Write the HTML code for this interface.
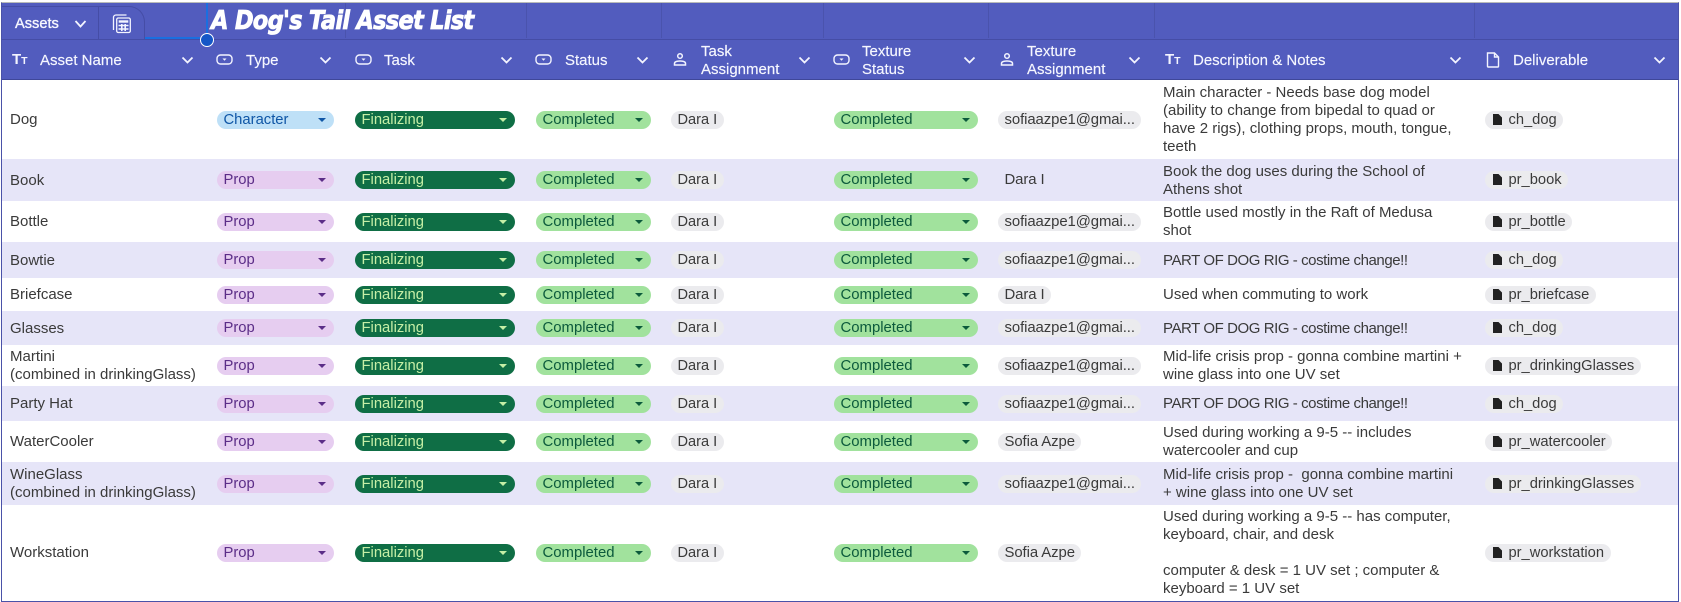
<!DOCTYPE html>
<html><head><meta charset="utf-8"><style>
html,body{margin:0;padding:0;background:#fff}
body{width:1681px;height:601px;position:relative;overflow:hidden;font:15px/18px "Liberation Sans",sans-serif;color:#3a3a3a}
#wrap{position:absolute;left:1px;top:2px;width:1676px;height:598px;border:1px solid #4a52a8;border-top:1px solid #b9bbb9;box-sizing:content-box}
.abs{position:absolute}
#top{position:absolute;left:2px;top:3px;width:1676px;height:36px;background:#525cbe}
#head{position:absolute;left:2px;top:39px;width:1676px;height:41px;background:#525cbe;border-top:1px solid #454da6;border-bottom:1px solid #3f4799;box-sizing:border-box}
.sep{position:absolute;top:3px;height:35px;width:1px;background:#4a53ad}
.h{position:absolute;color:#f6f7ff;font-size:15px;line-height:18px;white-space:nowrap;transform:translateY(1px);-webkit-text-stroke:.15px #f6f7ff}
.ic{position:absolute;top:51px;fill:none;stroke:#f3f4ff}
.tt{position:absolute;top:51px;color:#f3f4ff;font-weight:bold;font-size:15px;line-height:18px}
.tt small{font-size:10.5px}
.r{position:absolute;left:2px;width:1676px}
.a{background:#e6e5f8}
.c{position:absolute;top:0;bottom:0;display:flex;align-items:center;white-space:nowrap}
.n{left:8px;padding-top:1px}
.t{left:215px;font-size:14.8px}.k{left:353px;font-size:14.8px}.s{left:534px;font-size:14.9px}.u{left:669px;font-size:14.6px}.x{left:832px;font-size:14.9px}.y{left:996px;font-size:14.9px}.d{left:1161px;white-space:pre-line;padding-top:1px}.f{left:1483px;font-size:14.7px}
.y .g{letter-spacing:-.08px}
.cap{letter-spacing:-.43px}
.p{display:block;height:18px;line-height:19px;border-radius:9px;padding-left:6.5px;box-sizing:border-box;position:relative}
.p:after{content:"";position:absolute;right:8px;top:7px;border:4.5px solid transparent;border-top:4.5px solid currentColor;border-bottom:0}
.pr{width:117px;background:#e6cdf0;color:#5b2d87}
.ch{width:117px;background:#bee0f7;color:#0f56a6}
.fi{width:160px;background:#0f6e45;color:#c6efa6}
.co{width:115px;background:#a1e29d;color:#0c5a3c}
.cw{width:144px}
.g{display:block;height:18px;line-height:19px;border-radius:9px;background:#ebebee;color:#3a3a3a;padding:0 6.5px}
.g svg{display:inline-block;vertical-align:-1px;margin-right:7px;margin-left:1px}
</style></head><body>
<div id="wrap"></div>
<div id="top"></div>
<div id="head"></div>
<div class="sep" style="left:345px"></div><div class="sep" style="left:526px"></div><div class="sep" style="left:661px"></div><div class="sep" style="left:823px"></div><div class="sep" style="left:988px"></div><div class="sep" style="left:1154px"></div><div class="sep" style="left:1474px"></div>

<div class="abs" style="left:2px;top:6px;width:143px;height:33px;border:1px solid #454da6;border-left:0;border-bottom:0;border-radius:0 16px 0 0;box-sizing:border-box"></div>
<div class="abs" style="left:98px;top:6px;width:1px;height:33px;background:#454da6"></div>
<div class="h" style="left:15px;top:14px;font-size:14.6px;-webkit-text-stroke:.35px #f6f7ff">Assets</div>
<svg class="abs" style="left:74px;top:19px" width="13" height="10" fill="none" stroke="#f3f4ff" stroke-width="1.8"><path d="M1.5 2 6.5 7.5 11.5 2"/></svg>
<svg class="abs" style="left:112px;top:14px" width="20" height="20" fill="none" stroke="#f3f4ff" stroke-width="1.3"><path d="M1.5 16V3.5C1.5 2 2.5 1 4 1H14.5"/><rect x="4.7" y="4" width="13.6" height="14.5" rx="1.5"/><path d="M6.7 7.5H16.3" stroke-width="2.4"/><path d="M6.5 11.5H16.5M6.5 15H16.5M9.8 10V17M13.2 10V17" stroke-width="1.6"/></svg>
<div class="abs" style="left:145px;top:37px;width:62px;height:2px;background:#1a6fe0"></div>
<div class="abs" style="left:206px;top:3px;width:2px;height:35px;background:#1a6fe0"></div>
<div class="abs" style="left:200px;top:33px;width:12px;height:12px;border-radius:50%;background:#1557c7;border:1px solid #fff"></div>
<div class="abs" style="left:211px;top:6px;color:#fff;font:italic bold 26px/30px 'DejaVu Sans',sans-serif;letter-spacing:-.9px;-webkit-text-stroke:.8px #fff;white-space:nowrap;transform:scaleX(.87);transform-origin:0 0">A Dog's Tail Asset List</div>

<div class="tt" style="left:12px">T<small>T</small></div><div class="h" style="left:40px;top:51px">Asset Name</div>
<svg class="ic" style="left:216px;top:53px" width="17" height="13" stroke-width="1.4"><rect x="1" y="2" width="15" height="9" rx="3.5"/><path d="M6.5 5.5H10.5L8.5 7.7Z" fill="#f3f4ff" stroke="none"/></svg><div class="h" style="left:246px;top:51px">Type</div>
<svg class="ic" style="left:355px;top:53px" width="17" height="13" stroke-width="1.4"><rect x="1" y="2" width="15" height="9" rx="3.5"/><path d="M6.5 5.5H10.5L8.5 7.7Z" fill="#f3f4ff" stroke="none"/></svg><div class="h" style="left:384px;top:51px">Task</div>
<svg class="ic" style="left:535px;top:53px" width="17" height="13" stroke-width="1.4"><rect x="1" y="2" width="15" height="9" rx="3.5"/><path d="M6.5 5.5H10.5L8.5 7.7Z" fill="#f3f4ff" stroke="none"/></svg><div class="h" style="left:565px;top:51px">Status</div>
<svg class="ic" style="left:673px;top:52px" width="14" height="15" stroke-width="1.5"><circle cx="7" cy="4" r="2.3"/><path d="M1.5 13V11.5C1.5 9.8 4 9 7 9S12.5 9.8 12.5 11.5V13Z"/></svg><div class="h" style="left:701px;top:42px">Task<br>Assignment</div>
<svg class="ic" style="left:833px;top:53px" width="17" height="13" stroke-width="1.4"><rect x="1" y="2" width="15" height="9" rx="3.5"/><path d="M6.5 5.5H10.5L8.5 7.7Z" fill="#f3f4ff" stroke="none"/></svg><div class="h" style="left:862px;top:42px">Texture<br>Status</div>
<svg class="ic" style="left:1000px;top:52px" width="14" height="15" stroke-width="1.5"><circle cx="7" cy="4" r="2.3"/><path d="M1.5 13V11.5C1.5 9.8 4 9 7 9S12.5 9.8 12.5 11.5V13Z"/></svg><div class="h" style="left:1027px;top:42px">Texture<br>Assignment</div>
<div class="tt" style="left:1165px">T<small>T</small></div><div class="h" style="left:1193px;top:51px">Description &amp; Notes</div>
<svg class="ic" style="left:1486px;top:52px" width="14" height="16" stroke-width="1.4"><path d="M1.5 1H8.5L12.5 5V14.2C12.5 14.7 12.2 15 11.7 15H2.3C1.8 15 1.5 14.7 1.5 14.2ZM8.5 1V5H12.5"/></svg><div class="h" style="left:1513px;top:51px">Deliverable</div>

<svg class="abs" style="left:181px;top:56px" width="13" height="9" fill="none" stroke="#f3f4ff" stroke-width="1.8"><path d="M1.5 1.5 6.5 6.5 11.5 1.5"/></svg>
<svg class="abs" style="left:319px;top:56px" width="13" height="9" fill="none" stroke="#f3f4ff" stroke-width="1.8"><path d="M1.5 1.5 6.5 6.5 11.5 1.5"/></svg>
<svg class="abs" style="left:500px;top:56px" width="13" height="9" fill="none" stroke="#f3f4ff" stroke-width="1.8"><path d="M1.5 1.5 6.5 6.5 11.5 1.5"/></svg>
<svg class="abs" style="left:636px;top:56px" width="13" height="9" fill="none" stroke="#f3f4ff" stroke-width="1.8"><path d="M1.5 1.5 6.5 6.5 11.5 1.5"/></svg>
<svg class="abs" style="left:798px;top:56px" width="13" height="9" fill="none" stroke="#f3f4ff" stroke-width="1.8"><path d="M1.5 1.5 6.5 6.5 11.5 1.5"/></svg>
<svg class="abs" style="left:963px;top:56px" width="13" height="9" fill="none" stroke="#f3f4ff" stroke-width="1.8"><path d="M1.5 1.5 6.5 6.5 11.5 1.5"/></svg>
<svg class="abs" style="left:1128px;top:56px" width="13" height="9" fill="none" stroke="#f3f4ff" stroke-width="1.8"><path d="M1.5 1.5 6.5 6.5 11.5 1.5"/></svg>
<svg class="abs" style="left:1449px;top:56px" width="13" height="9" fill="none" stroke="#f3f4ff" stroke-width="1.8"><path d="M1.5 1.5 6.5 6.5 11.5 1.5"/></svg>
<svg class="abs" style="left:1653px;top:56px" width="13" height="9" fill="none" stroke="#f3f4ff" stroke-width="1.8"><path d="M1.5 1.5 6.5 6.5 11.5 1.5"/></svg>

<div class="r" style="top:80px;height:79px"><div class="c n">Dog</div><div class="c t"><span class="p ch">Character</span></div><div class="c k"><span class="p fi">Finalizing</span></div><div class="c s"><span class="p co">Completed</span></div><div class="c u"><span class="g">Dara I</span></div><div class="c x"><span class="p co cw">Completed</span></div><div class="c y"><span class="g">sofiaazpe1@gmai...</span></div><div class="c d">Main character - Needs base dog model
(ability to change from bipedal to quad or
have 2 rigs), clothing props, mouth, tongue,
teeth</div><div class="c f"><span class="g"><svg width="9" height="11"><path d="M0 0H5.5L9 3.5V11H0Z" fill="#222"/></svg>ch_dog</span></div></div>

<div class="r a" style="top:159px;height:42px"><div class="c n">Book</div><div class="c t"><span class="p pr">Prop</span></div><div class="c k"><span class="p fi">Finalizing</span></div><div class="c s"><span class="p co">Completed</span></div><div class="c u"><span class="g">Dara I</span></div><div class="c x"><span class="p co cw">Completed</span></div><div class="c y"><span class="g" style="background:none">Dara I</span></div><div class="c d">Book the dog uses during the School of
Athens shot</div><div class="c f"><span class="g"><svg width="9" height="11"><path d="M0 0H5.5L9 3.5V11H0Z" fill="#222"/></svg>pr_book</span></div></div>

<div class="r" style="top:201px;height:41px"><div class="c n">Bottle</div><div class="c t"><span class="p pr">Prop</span></div><div class="c k"><span class="p fi">Finalizing</span></div><div class="c s"><span class="p co">Completed</span></div><div class="c u"><span class="g">Dara I</span></div><div class="c x"><span class="p co cw">Completed</span></div><div class="c y"><span class="g">sofiaazpe1@gmai...</span></div><div class="c d">Bottle used mostly in the Raft of Medusa
shot</div><div class="c f"><span class="g"><svg width="9" height="11"><path d="M0 0H5.5L9 3.5V11H0Z" fill="#222"/></svg>pr_bottle</span></div></div>

<div class="r a" style="top:242px;height:36px"><div class="c n">Bowtie</div><div class="c t"><span class="p pr">Prop</span></div><div class="c k"><span class="p fi">Finalizing</span></div><div class="c s"><span class="p co">Completed</span></div><div class="c u"><span class="g">Dara I</span></div><div class="c x"><span class="p co cw">Completed</span></div><div class="c y"><span class="g">sofiaazpe1@gmai...</span></div><div class="c d cap">PART OF DOG RIG - costime change!!</div><div class="c f"><span class="g"><svg width="9" height="11"><path d="M0 0H5.5L9 3.5V11H0Z" fill="#222"/></svg>ch_dog</span></div></div>

<div class="r" style="top:278px;height:33px"><div class="c n">Briefcase</div><div class="c t"><span class="p pr">Prop</span></div><div class="c k"><span class="p fi">Finalizing</span></div><div class="c s"><span class="p co">Completed</span></div><div class="c u"><span class="g">Dara I</span></div><div class="c x"><span class="p co cw">Completed</span></div><div class="c y"><span class="g">Dara I</span></div><div class="c d">Used when commuting to work</div><div class="c f"><span class="g"><svg width="9" height="11"><path d="M0 0H5.5L9 3.5V11H0Z" fill="#222"/></svg>pr_briefcase</span></div></div>

<div class="r a" style="top:311px;height:34px"><div class="c n">Glasses</div><div class="c t"><span class="p pr">Prop</span></div><div class="c k"><span class="p fi">Finalizing</span></div><div class="c s"><span class="p co">Completed</span></div><div class="c u"><span class="g">Dara I</span></div><div class="c x"><span class="p co cw">Completed</span></div><div class="c y"><span class="g">sofiaazpe1@gmai...</span></div><div class="c d cap">PART OF DOG RIG - costime change!!</div><div class="c f"><span class="g"><svg width="9" height="11"><path d="M0 0H5.5L9 3.5V11H0Z" fill="#222"/></svg>ch_dog</span></div></div>

<div class="r" style="top:345px;height:41px"><div class="c n">Martini<br>(combined in drinkingGlass)</div><div class="c t"><span class="p pr">Prop</span></div><div class="c k"><span class="p fi">Finalizing</span></div><div class="c s"><span class="p co">Completed</span></div><div class="c u"><span class="g">Dara I</span></div><div class="c x"><span class="p co cw">Completed</span></div><div class="c y"><span class="g">sofiaazpe1@gmai...</span></div><div class="c d">Mid-life crisis prop - gonna combine martini +
wine glass into one UV set</div><div class="c f"><span class="g"><svg width="9" height="11"><path d="M0 0H5.5L9 3.5V11H0Z" fill="#222"/></svg>pr_drinkingGlasses</span></div></div>

<div class="r a" style="top:386px;height:35px"><div class="c n">Party Hat</div><div class="c t"><span class="p pr">Prop</span></div><div class="c k"><span class="p fi">Finalizing</span></div><div class="c s"><span class="p co">Completed</span></div><div class="c u"><span class="g">Dara I</span></div><div class="c x"><span class="p co cw">Completed</span></div><div class="c y"><span class="g">sofiaazpe1@gmai...</span></div><div class="c d cap">PART OF DOG RIG - costime change!!</div><div class="c f"><span class="g"><svg width="9" height="11"><path d="M0 0H5.5L9 3.5V11H0Z" fill="#222"/></svg>ch_dog</span></div></div>

<div class="r" style="top:421px;height:41px"><div class="c n">WaterCooler</div><div class="c t"><span class="p pr">Prop</span></div><div class="c k"><span class="p fi">Finalizing</span></div><div class="c s"><span class="p co">Completed</span></div><div class="c u"><span class="g">Dara I</span></div><div class="c x"><span class="p co cw">Completed</span></div><div class="c y"><span class="g">Sofia Azpe</span></div><div class="c d">Used during working a 9-5 -- includes
watercooler and cup</div><div class="c f"><span class="g"><svg width="9" height="11"><path d="M0 0H5.5L9 3.5V11H0Z" fill="#222"/></svg>pr_watercooler</span></div></div>

<div class="r a" style="top:462px;height:43px"><div class="c n">WineGlass<br>(combined in drinkingGlass)</div><div class="c t"><span class="p pr">Prop</span></div><div class="c k"><span class="p fi">Finalizing</span></div><div class="c s"><span class="p co">Completed</span></div><div class="c u"><span class="g">Dara I</span></div><div class="c x"><span class="p co cw">Completed</span></div><div class="c y"><span class="g">sofiaazpe1@gmai...</span></div><div class="c d">Mid-life crisis prop -&nbsp; gonna combine martini
+ wine glass into one UV set</div><div class="c f"><span class="g"><svg width="9" height="11"><path d="M0 0H5.5L9 3.5V11H0Z" fill="#222"/></svg>pr_drinkingGlasses</span></div></div>

<div class="r" style="top:505px;height:95px"><div class="c n">Workstation</div><div class="c t"><span class="p pr">Prop</span></div><div class="c k"><span class="p fi">Finalizing</span></div><div class="c s"><span class="p co">Completed</span></div><div class="c u"><span class="g">Dara I</span></div><div class="c x"><span class="p co cw">Completed</span></div><div class="c y"><span class="g">Sofia Azpe</span></div><div class="c d">Used during working a 9-5 -- has computer,
keyboard, chair, and desk

computer &amp; desk = 1 UV set ; computer &amp;
keyboard = 1 UV set</div><div class="c f"><span class="g"><svg width="9" height="11"><path d="M0 0H5.5L9 3.5V11H0Z" fill="#222"/></svg>pr_workstation</span></div></div>
</body></html>
